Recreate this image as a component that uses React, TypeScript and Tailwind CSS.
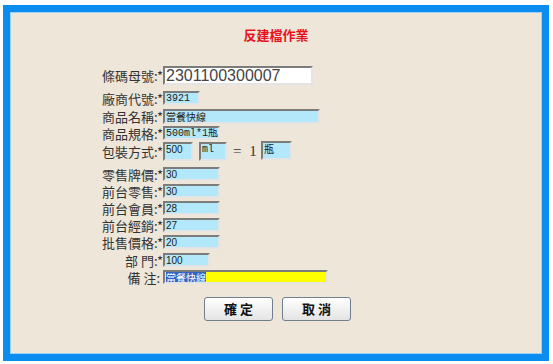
const cjk = "font-['Noto_Sans_CJK_TC','Noto_Sans_CJK_SC',sans-serif]";

function Box({ w, h = 14, bg = "bg-[#b3e8fb]", children, className = "" }: { w: number; h?: number; bg?: string; children?: React.ReactNode; className?: string }) {
  return (
    <div
      className={`box-border flex items-start overflow-hidden border-2 border-t-[#7c7c7c] border-l-[#7c7c7c] border-r-[#e4e4e4] border-b-[#e4e4e4] pl-[1px] text-[10px] leading-[11px] text-[#222] ${bg} ${className}`}
      style={{ width: w, height: h }}
    >
      {children}
    </div>
  );
}

function Row({ label, h = 17, children }: { label: string; h?: number; children: React.ReactNode }) {
  return (
    <div className="flex items-start" style={{ height: h }}>
      <div className={`flex h-[14px] w-[71px] items-center justify-end whitespace-pre text-[13px] leading-[13px] text-[#333] ${cjk}`}>{label}</div>
      <div className="flex items-start">{children}</div>
    </div>
  );
}

const small = "font-['Liberation_Sans',sans-serif]";
const mono = `font-['Liberation_Mono','Noto_Sans_CJK_TC',monospace]`;

export default function App() {
  return (
    <div className="h-[364px] w-[553px] bg-white pl-[3px] pt-[5px]">
      <div className="box-border h-[356px] w-[546px] bg-[#0b8def] p-[7px]">
        <div className="box-border h-full w-full border border-[#9fd0f5] bg-[#ede6d9]">
          <div className={`pt-[13px] text-center text-[13px] font-bold leading-[17px] text-[#e8121b] ${cjk}`}>反建檔作業</div>

          <div className="ml-[81px] mt-[25px] flex flex-col">
            <Row label="條碼母號:*" h={23}>
              <Box w={150} h={19} bg="bg-white" className="mt-[-2px]">
                <span className={`text-[16px] leading-[15px] text-[#444] ${small}`}>2301100300007</span>
              </Box>
            </Row>
            <Row label="廠商代號:*" h={18}>
              <Box w={37}>
                <span className={mono}>3921</span>
              </Box>
            </Row>
            <Row label="商品名稱:*">
              <Box w={157} h={15}>
                <span className={cjk}>當餐快線</span>
              </Box>
            </Row>
            <Row label="商品規格:*" h={18}>
              <Box w={57}>
                <span className={mono}>500ml*1瓶</span>
              </Box>
            </Row>
            <Row label="包裝方式:*" h={23}>
              <Box w={30} h={19} className="-mt-[2px]">
                <span className={small}>500</span>
              </Box>
              <Box w={28} h={19} className="-mt-[2px] ml-[6px]">
                <span className={mono}>ml</span>
              </Box>
              <span className="ml-[6px] w-[14px] text-[15px] leading-[14px] text-[#333] font-['Liberation_Serif',serif]">=</span>
              <span className="w-[12px] text-center text-[15px] leading-[15px] text-[#333] font-['Liberation_Serif',serif]">1</span>
              <Box w={31} h={19} className="-mt-[3px] ml-[2px]">
                <span className={cjk}>瓶</span>
              </Box>
            </Row>
            <Row label="零售牌價:*">
              <Box w={57}>
                <span className={small}>30</span>
              </Box>
            </Row>
            <Row label="前台零售:*">
              <Box w={57}>
                <span className={small}>30</span>
              </Box>
            </Row>
            <Row label="前台會員:*">
              <Box w={57}>
                <span className={small}>28</span>
              </Box>
            </Row>
            <Row label="前台經銷:*">
              <Box w={57}>
                <span className={small}>27</span>
              </Box>
            </Row>
            <Row label="批售價格:*" h={18}>
              <Box w={57}>
                <span className={small}>20</span>
              </Box>
            </Row>
            <Row label="部 門:*">
              <Box w={47}>
                <span className={small}>100</span>
              </Box>
            </Row>
            <Row label="備 注: ">
              <Box w={165} bg="bg-[#ffff00]">
                <span className={`bg-[#3465c4] text-white ${cjk}`}>當餐快線</span>
              </Box>
            </Row>
          </div>

          <div className="ml-[193px] mt-[10px] flex gap-[9px]">
            {["確 定", "取 消"].map((t) => (
              <button
                key={t}
                className={`box-border h-[24px] w-[69px] rounded-[3px] border border-[#6f7f8e] bg-gradient-to-b from-white to-[#e4e4e4] text-[13px] font-bold leading-[14px] text-[#111] whitespace-pre ${cjk}`}
              >
                {t}
              </button>
            ))}
          </div>
        </div>
      </div>
    </div>
  );
}
